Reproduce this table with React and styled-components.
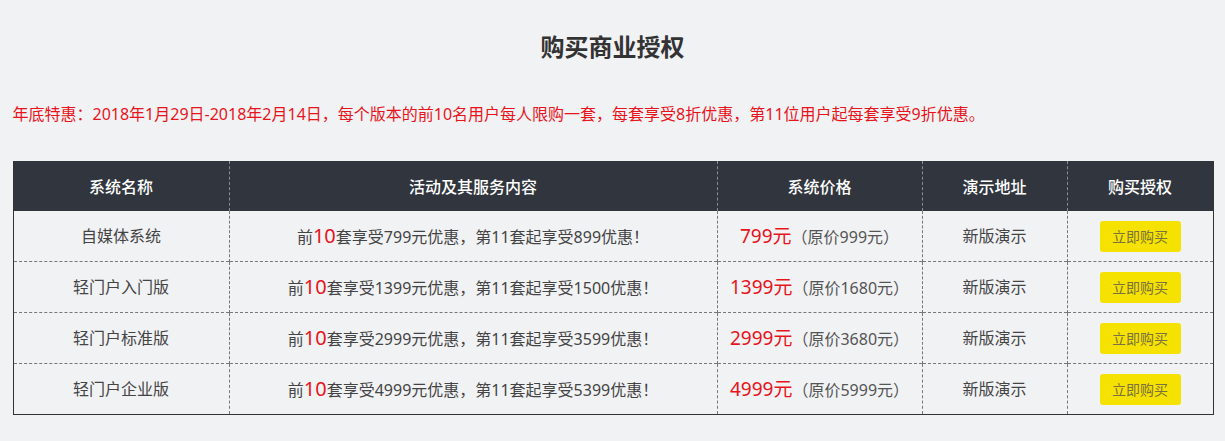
import React from "react";
import styled, { createGlobalStyle } from "styled-components";

const Global = createGlobalStyle`
  html, body { margin: 0; padding: 0; background: #f1f2f4; }
  body { font-family: "Noto Sans", "Noto Sans CJK SC", sans-serif; color: #444; }
`;

const Page = styled.div`
  width: 1200px;
  margin: 0 auto;
  padding-top: 30px;
`;

const Title = styled.h1`
  margin: 0;
  text-align: center;
  font-size: 24px;
  line-height: 34px;
  font-weight: 700;
  color: #333;
`;

const Notice = styled.p`
  margin: 38px 0 0;
  font-size: 16px;
  line-height: 24px;
  color: #e8141b;
`;

const Table = styled.table`
  margin-top: 35px;
  width: 1200px;
  table-layout: fixed;
  border-collapse: collapse;
  border: 1px solid #333;
  border-top: none;
`;

const HeadCell = styled.th`
  height: 50px;
  padding: 0;
  background: #31363e;
  color: #fff;
  font-size: 16px;
  font-weight: 500;
  text-align: center;
  border-right: 1px dashed #8a8d92;
  &:last-child { border-right: none; }
`;

const Row = styled.tr`
  border-bottom: 1px dashed #777;
  &:last-child { border-bottom: 1px solid #333; }
`;

const Cell = styled.td`
  height: 50px;
  padding: 0;
  text-align: center;
  font-size: 16px;
  line-height: 24px;
  color: #444;
  border-right: 1px dashed #777;
  &:last-child { border-right: 1px solid #333; }
`;

const Red = styled.span`
  color: #e8141b;
  font-size: ${(p) => p.$size || 20}px;
`;

const Muted = styled.span`
  color: #555;
`;

const BuyButton = styled.a`
  display: inline-block;
  width: 81px;
  height: 31px;
  line-height: 31px;
  border-radius: 3px;
  background: #f5e200;
  color: #7a7040;
  font-size: 14px;
  text-decoration: none;
  vertical-align: middle;
`;

const cols = [216, 488, 205, 145, 146];

const rows = [
  { name: "自媒体系统", p1: "799", p2: "899", price: "799", orig: "999" },
  { name: "轻门户入门版", p1: "1399", p2: "1500", price: "1399", orig: "1680" },
  { name: "轻门户标准版", p1: "2999", p2: "3599", price: "2999", orig: "3680" },
  { name: "轻门户企业版", p1: "4999", p2: "5399", price: "4999", orig: "5999" },
];

export default function App() {
  return (
    <Page>
      <Global />
      <Title>购买商业授权</Title>
      <Notice>
        年底特惠：2018年1月29日-2018年2月14日，每个版本的前10名用户每人限购一套，每套享受8折优惠，第11位用户起每套享受9折优惠。
      </Notice>
      <Table>
        <colgroup>
          {cols.map((w, i) => (
            <col key={i} style={{ width: w }} />
          ))}
        </colgroup>
        <thead>
          <tr>
            <HeadCell>系统名称</HeadCell>
            <HeadCell>活动及其服务内容</HeadCell>
            <HeadCell>系统价格</HeadCell>
            <HeadCell>演示地址</HeadCell>
            <HeadCell>购买授权</HeadCell>
          </tr>
        </thead>
        <tbody>
          {rows.map((r) => (
            <Row key={r.name}>
              <Cell>{r.name}</Cell>
              <Cell>
                前<Red $size={20}>10</Red>套享受{r.p1}元优惠，第11套起享受{r.p2}优惠！
              </Cell>
              <Cell>
                <Red $size={19}>{r.price}元</Red>
                <Muted>（原价{r.orig}元）</Muted>
              </Cell>
              <Cell>新版演示</Cell>
              <Cell>
                <BuyButton href="#">立即购买</BuyButton>
              </Cell>
            </Row>
          ))}
        </tbody>
      </Table>
    </Page>
  );
}
